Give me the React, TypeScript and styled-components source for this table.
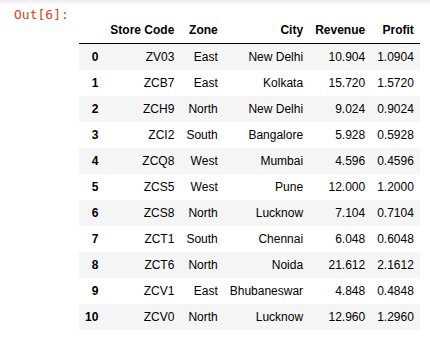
import React from "react";
import styled, { createGlobalStyle } from "styled-components";

const GlobalStyle = createGlobalStyle`
  html, body { margin: 0; padding: 0; background: #ffffff; }
  body { width: 430px; height: 338px; overflow: hidden; }
`;

const Page = styled.div`
  width: 430px;
  height: 338px;
  background: #ffffff;
  display: flex;
  flex-direction: column;
`;

const TopShade = styled.div`
  height: 6px;
  flex: none;
  background: linear-gradient(to bottom, rgba(0, 0, 0, 0.07), rgba(0, 0, 0, 0));
`;

const OutputRow = styled.div`
  display: flex;
  flex-direction: row;
  align-items: flex-start;
`;

const Prompt = styled.div`
  width: 79px;
  flex: none;
  box-sizing: border-box;
  padding: 0 0 0 14px;
  margin-top: 1px;
  font-family: "DejaVu Sans Mono", "Liberation Mono", monospace;
  font-size: 13px;
  line-height: 15px;
  color: #d84315;
  white-space: nowrap;
`;

const TableWrap = styled.div`
  padding-top: 11px;
`;

const Table = styled.table`
  border: none;
  border-collapse: collapse;
  border-spacing: 0;
  color: #000000;
  font-family: "Liberation Sans", Arial, Helvetica, sans-serif;
  font-size: 12px;
`;

const Head = styled.thead`
  border-bottom: 1px solid #000000;
`;

const HeadCell = styled.th`
  text-align: right;
  vertical-align: bottom;
  padding: 6px;
  line-height: 14px;
  font-weight: bold;
  white-space: nowrap;
`;

const Row = styled.tr<{ $odd: boolean }>`
  background: ${(p) => (p.$odd ? "#f5f5f5" : "#ffffff")};
`;

const IndexCell = styled.th`
  text-align: right;
  vertical-align: middle;
  padding: 6px;
  line-height: 14px;
  font-weight: bold;
  white-space: nowrap;
`;

const Cell = styled.td`
  text-align: right;
  vertical-align: middle;
  padding: 6px;
  line-height: 14px;
  white-space: nowrap;
`;

const columns = ["Store Code", "Zone", "City", "Revenue", "Profit"];

const rows: [string, string, string, string, string][] = [
  ["ZV03", "East", "New Delhi", "10.904", "1.0904"],
  ["ZCB7", "East", "Kolkata", "15.720", "1.5720"],
  ["ZCH9", "North", "New Delhi", "9.024", "0.9024"],
  ["ZCI2", "South", "Bangalore", "5.928", "0.5928"],
  ["ZCQ8", "West", "Mumbai", "4.596", "0.4596"],
  ["ZCS5", "West", "Pune", "12.000", "1.2000"],
  ["ZCS8", "North", "Lucknow", "7.104", "0.7104"],
  ["ZCT1", "South", "Chennai", "6.048", "0.6048"],
  ["ZCT6", "North", "Noida", "21.612", "2.1612"],
  ["ZCV1", "East", "Bhubaneswar", "4.848", "0.4848"],
  ["ZCV0", "North", "Lucknow", "12.960", "1.2960"],
];

export default function App() {
  return (
    <>
      <GlobalStyle />
      <Page>
        <TopShade />
        <OutputRow>
          <Prompt>Out[6]:</Prompt>
          <TableWrap>
            <Table>
              <Head>
                <tr>
                  <HeadCell></HeadCell>
                  {columns.map((c) => (
                    <HeadCell key={c}>{c}</HeadCell>
                  ))}
                </tr>
              </Head>
              <tbody>
                {rows.map((r, i) => (
                  <Row key={i} $odd={i % 2 === 0}>
                    <IndexCell>{i}</IndexCell>
                    {r.map((v, j) => (
                      <Cell key={j}>{v}</Cell>
                    ))}
                  </Row>
                ))}
              </tbody>
            </Table>
          </TableWrap>
        </OutputRow>
      </Page>
    </>
  );
}
